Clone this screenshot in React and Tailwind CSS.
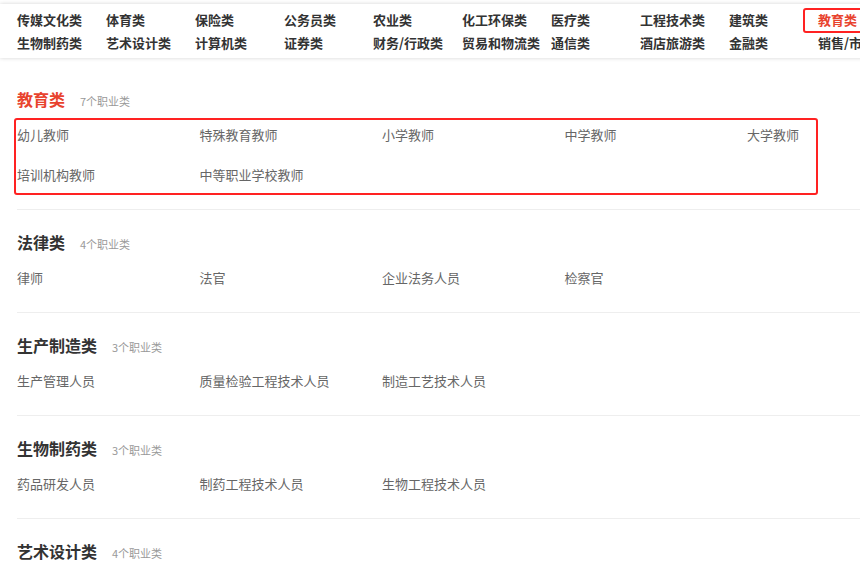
import React from "react";

const navRows = [
  ["传媒文化类", "体育类", "保险类", "公务员类", "农业类", "化工环保类", "医疗类", "工程技术类", "建筑类", "教育类"],
  ["生物制药类", "艺术设计类", "计算机类", "证券类", "财务/行政类", "贸易和物流类", "通信类", "酒店旅游类", "金融类", "销售/市场类"],
];

const sections = [
  { title: "教育类", count: "7个职业类", active: true, items: ["幼儿教师", "特殊教育教师", "小学教师", "中学教师", "大学教师", "培训机构教师", "中等职业学校教师"] },
  { title: "法律类", count: "4个职业类", items: ["律师", "法官", "企业法务人员", "检察官"] },
  { title: "生产制造类", count: "3个职业类", items: ["生产管理人员", "质量检验工程技术人员", "制造工艺技术人员"] },
  { title: "生物制药类", count: "3个职业类", items: ["药品研发人员", "制药工程技术人员", "生物工程技术人员"] },
  { title: "艺术设计类", count: "4个职业类", items: ["文案策划", "平面设计", "室内设计", "工业设计"] },
];

export default function App() {
  return (
    <div
      className="w-[860px] h-[568px] overflow-hidden bg-white relative"
      style={{ fontFamily: '"Microsoft YaHei", "Noto Sans CJK SC", "Noto Sans", sans-serif' }}
    >
      <div className="pt-[4px]">
        <div className="relative w-[900px] bg-white shadow-[0_0_4px_rgba(0,0,0,0.18)] pl-[17px] pt-[4px] pb-[4px]">
          {navRows.map((row, ri) => (
            <div key={ri} className="flex h-[23px] items-center">
              {row.map((t) => (
                <div
                  key={t}
                  className={`w-[89px] shrink-0 whitespace-nowrap text-[13px] font-bold leading-[23px] ${
                    t === "教育类" && ri === 0 ? "text-[#e8432e]" : "text-[#333]"
                  }`}
                >
                  {t}
                </div>
              ))}
            </div>
          ))}
          <div className="absolute left-[803px] top-[4px] w-[62px] h-[25px] border-2 border-[#f22] rounded-[3px]" />
        </div>
      </div>

      <div className="mt-[9px] ml-[17px]">
        {sections.map((s, si) => (
          <div key={si} className="border-b border-[#eeeeee] pt-[20px] pb-[14px]">
            <div className="flex items-baseline h-[24px] leading-[24px]">
              <span className={`text-[16px] font-bold ${s.active ? "text-[#e8432e]" : "text-[#333]"}`}>{s.title}</span>
              <span className="ml-[15px] text-[11px] text-[#999]">{s.count}</span>
            </div>
            <div className="relative mt-[4px]">
              <div className="grid grid-cols-[repeat(5,182.5px)]">
                {s.items.map((it) => (
                  <div key={it} className="h-[40px] leading-[40px] text-[13px] text-[#666] whitespace-nowrap">
                    {it}
                  </div>
                ))}
              </div>
              {s.active && (
                <div className="absolute left-[-3px] top-[3px] w-[804px] h-[77px] border-2 border-[#f22] rounded-[3px]" />
              )}
            </div>
          </div>
        ))}
      </div>
    </div>
  );
}
